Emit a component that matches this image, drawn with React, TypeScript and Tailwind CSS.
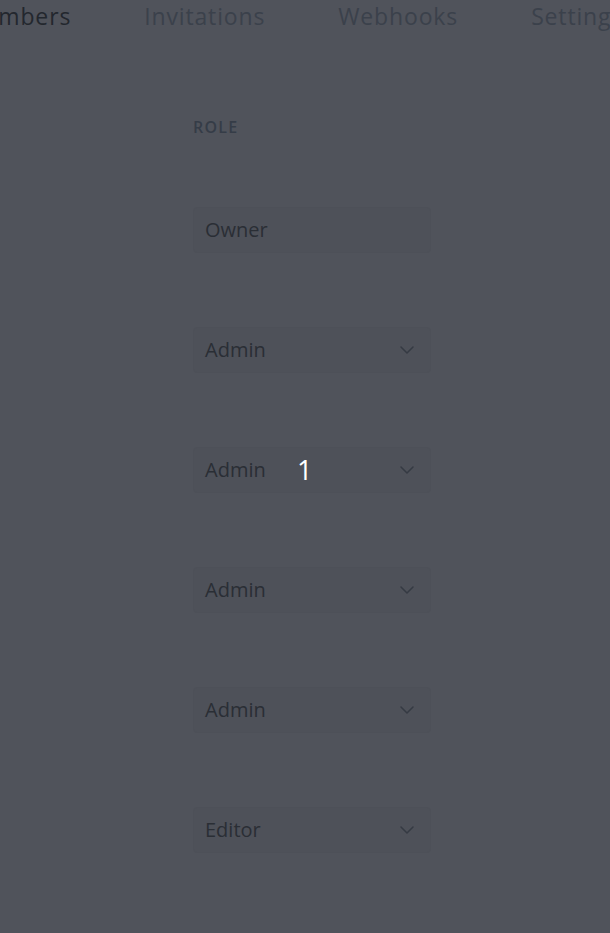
import * as React from 'react';

const roles = [
  { label: 'Owner', select: false },
  { label: 'Admin', select: true },
  { label: 'Admin', select: true },
  { label: 'Admin', select: true },
  { label: 'Admin', select: true },
  { label: 'Editor', select: true },
];

function Chevron() {
  return (
    <svg width="24" height="24" viewBox="0 0 24 24" fill="none" stroke="currentColor" strokeWidth="1.5" strokeLinecap="round" strokeLinejoin="round">
      <path d="m6 9 6 6 6-6" />
    </svg>
  );
}

export default function App() {
  return (
    <div className="w-[610px] h-[933px] overflow-hidden bg-[#50535b] font-['Open_Sans',sans-serif]">
      <div className="flex gap-[73px] -ml-[37px] whitespace-nowrap h-[32px] items-center text-[23px] tracking-[0.85px] text-[#3b414b]">
        <span className="text-[#23272e]">Members</span>
        <span>Invitations</span>
        <span>Webhooks</span>
        <span>Settings</span>
      </div>
      <div className="pl-[193px] pt-[86px]">
        <p className="text-[16px] font-semibold tracking-[0.08em] text-[#353c47] leading-[18px]">ROLE</p>
        <div className="flex flex-col gap-[74px] mt-[71px]">
          {roles.map((r, i) => (
            <div key={i} className="relative w-[238px] h-[46px] rounded bg-[#4e5159] border border-[#4d5058] flex items-center pl-[11px] pr-[11px] text-[20px] text-[#2a2e35]">
              <span>{r.label}</span>
              {i === 2 && (
                <span className="absolute left-[103px] top-[8px] text-[27px] text-white leading-none">1</span>
              )}
              {r.select && (
                <span className="ml-auto text-[#353a43]">
                  <Chevron />
                </span>
              )}
            </div>
          ))}
        </div>
      </div>
    </div>
  );
}
